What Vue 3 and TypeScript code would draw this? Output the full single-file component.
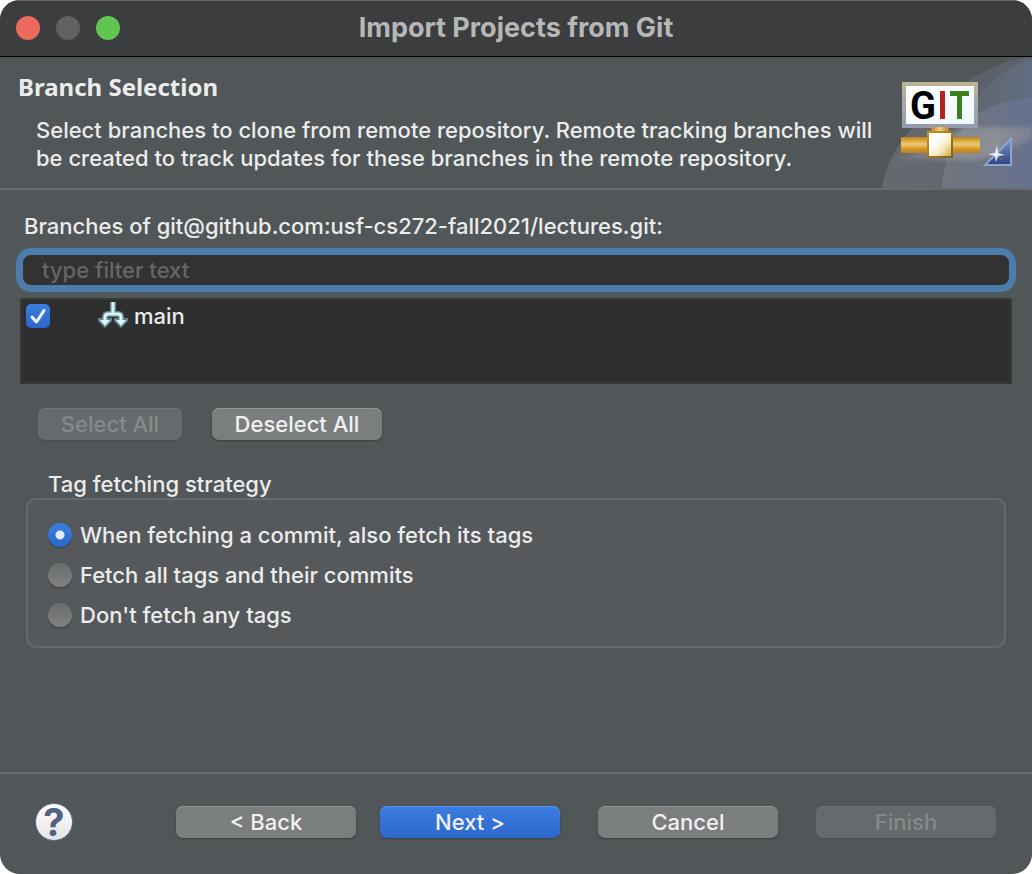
<script setup lang="ts">
import { ref } from 'vue'

interface Strategy {
  id: string
  label: string
}

const strategies: Strategy[] = [
  { id: 'auto', label: 'When fetching a commit, also fetch its tags' },
  { id: 'all', label: 'Fetch all tags and their commits' },
  { id: 'none', label: "Don't fetch any tags" },
]

const filter = ref('')
const mainSelected = ref(true)
const strategy = ref('auto')
</script>

<template>
  <main class="window">
    <header class="titlebar">
      <div class="lights">
        <button class="light close" type="button" aria-label="Close"></button>
        <button class="light minimize" type="button" aria-label="Minimize" disabled></button>
        <button class="light zoom" type="button" aria-label="Zoom"></button>
      </div>
      <h1 class="title">Import Projects from Git</h1>
    </header>

    <section class="banner">
      <div class="intro">
        <h2>Branch Selection</h2>
        <p>
          Select branches to clone from remote repository. Remote tracking branches will be created
          to track updates for these branches in the remote repository.
        </p>
      </div>
      <svg class="art" viewBox="0 0 150 131" width="150" height="131" aria-hidden="true">
        <defs>
          <linearGradient id="back" x1="0" y1="0" x2="1" y2="0">
            <stop offset="0" stop-color="#64686b" />
            <stop offset="0.5" stop-color="#5a6066" />
            <stop offset="1" stop-color="#5b636e" />
          </linearGradient>
          <linearGradient id="middle" x1="0" y1="0" x2="1" y2="0">
            <stop offset="0" stop-color="#65696f" />
            <stop offset="0.6" stop-color="#60676f" />
            <stop offset="1" stop-color="#616c81" />
          </linearGradient>
          <linearGradient id="front" x1="0" y1="0" x2="1" y2="0">
            <stop offset="0" stop-color="#71757e" />
            <stop offset="1" stop-color="#66728e" />
          </linearGradient>
          <linearGradient id="beam" x1="0" y1="0" x2="1" y2="0">
            <stop offset="0" stop-color="#96979b" stop-opacity="0.1" />
            <stop offset="0.35" stop-color="#96979b" stop-opacity="0.6" />
            <stop offset="0.75" stop-color="#96979b" stop-opacity="0.75" />
            <stop offset="1" stop-color="#96979b" stop-opacity="0.4" />
          </linearGradient>
          <linearGradient id="frame" x1="0" y1="0" x2="0" y2="1">
            <stop offset="0" stop-color="#bdb496" />
            <stop offset="1" stop-color="#929bb1" />
          </linearGradient>
          <linearGradient id="panel" x1="0" y1="0" x2="1" y2="1">
            <stop offset="0" stop-color="#ffffff" />
            <stop offset="1" stop-color="#edf8fd" />
          </linearGradient>
          <linearGradient id="pipe" x1="0" y1="0" x2="0" y2="1">
            <stop offset="0" stop-color="#b98525" />
            <stop offset="0.15" stop-color="#d29c32" />
            <stop offset="0.45" stop-color="#efcd71" />
            <stop offset="0.75" stop-color="#d09629" />
            <stop offset="1" stop-color="#bc8120" />
          </linearGradient>
          <linearGradient id="neck" x1="0" y1="0" x2="1" y2="0">
            <stop offset="0" stop-color="#b98228" />
            <stop offset="0.5" stop-color="#f0cf78" />
            <stop offset="1" stop-color="#b98228" />
          </linearGradient>
          <linearGradient id="joint" x1="0" y1="0" x2="1" y2="1">
            <stop offset="0.35" stop-color="#ffffff" />
            <stop offset="0.65" stop-color="#f6e7bb" />
            <stop offset="1" stop-color="#d39c27" />
          </linearGradient>
          <linearGradient id="jointEdge" x1="0" y1="0" x2="1" y2="1">
            <stop offset="0" stop-color="#c9912b" />
            <stop offset="1" stop-color="#7d5f24" />
          </linearGradient>
          <linearGradient id="corner" x1="0" y1="0" x2="0" y2="1">
            <stop offset="0" stop-color="#7c95c2" />
            <stop offset="1" stop-color="#2c4580" />
          </linearGradient>
          <filter id="soft" x="-10%" y="-30%" width="120%" height="160%">
            <feGaussianBlur stdDeviation="2" />
          </filter>
        </defs>
        <path d="M0 131C4 108 14 88 32 70L76 30C96 16 120 5 144 0H150V131Z" fill="url(#back)" />
        <path d="M0 131C4 108 14 88 32 70H84C86 56 92 46 97 39C112 20 130 8 150 2V131Z" fill="url(#middle)" />
        <path d="M60 131C62 96 76 70 97 56C112 47 130 42 150 41V131Z" fill="url(#front)" />
        <path d="M4 102C46 96 66 78 82 70H150V82C124 92 108 103 90 103Z" fill="url(#beam)" filter="url(#soft)" />
        <rect x="20" y="25" width="76" height="46" fill="url(#frame)" />
        <rect x="24" y="29" width="68" height="38" fill="url(#panel)" />
        <text class="mark" y="62" x="28">G</text>
        <rect x="58" y="34" width="5" height="28" fill="#b5211f" />
        <path d="M68 34H87V39H80V62H75V39H68Z" fill="#38811c" />
        <rect x="49" y="70" width="18" height="6" fill="url(#neck)" />
        <rect x="19" y="80" width="79" height="16" fill="url(#pipe)" />
        <rect x="46" y="75" width="24" height="25" fill="url(#joint)" stroke="url(#jointEdge)" stroke-width="2" />
        <path d="M129 82V108H103Z" fill="url(#corner)" stroke="#8ca4d0" stroke-width="2" />
        <path d="M109 92L120 103M120 92L109 103" stroke="#a7b9de" stroke-width="1" opacity="0.3" />
        <path d="M115 88L116 96L123 98L116 99L114 105L113 99L106 97L113 96Z" fill="#e9effa" />
      </svg>
    </section>

    <form class="content" @submit.prevent>
      <label class="caption" for="filter">Branches of git@github.com:usf-cs272-fall2021/lectures.git:</label>
      <input id="filter" v-model="filter" class="filter" type="text" placeholder="type filter text" />

      <div class="branches">
        <label class="branch">
          <span class="check">
            <input v-model="mainSelected" type="checkbox" />
            <svg v-if="mainSelected" viewBox="0 0 24 24" width="24" height="24" aria-hidden="true">
              <path d="M6 13L10.500 18L18 6.500" fill="none" stroke="#f0f5fd" stroke-width="3" stroke-linecap="round" stroke-linejoin="round" />
            </svg>
          </span>
          <svg class="fork" viewBox="0 0 30 28" width="30" height="28" aria-hidden="true">
            <g stroke="#64868c" stroke-width="6" fill="none">
              <path d="M15 0V13M7 19V15Q7 12 10 12H20Q23 12 23 15V19" />
            </g>
            <path d="M0 16H14V19L7 26L0 19ZM16 16H30V19L23 26L16 19Z" fill="#64868c" />
            <path d="M15 0V12M7 20V15Q7 12 10 12H20Q23 12 23 15V20" stroke="#d9f3f3" stroke-width="3" fill="none" />
            <path d="M2 18H12L7 24ZM18 18H28L23 24Z" fill="#d9f8f8" />
          </svg>
          <span>main</span>
        </label>
      </div>

      <div class="bulk">
        <button class="push select" type="button" disabled>Select All</button>
        <button class="push deselect" type="button">Deselect All</button>
      </div>

      <fieldset class="group" aria-labelledby="strategy-title">
        <div id="strategy-title" class="group-title">Tag fetching strategy</div>
        <div class="options">
          <label v-for="item in strategies" :key="item.id" class="option">
            <input v-model="strategy" type="radio" name="strategy" :value="item.id" />
            <span>{{ item.label }}</span>
          </label>
        </div>
      </fieldset>
    </form>

    <footer class="footer">
      <button class="help" type="button" aria-label="Help">?</button>
      <div class="actions">
        <div class="steps">
          <button class="push" type="button">&lt; Back</button>
          <button class="push primary" type="button">Next &gt;</button>
        </div>
        <button class="push" type="button">Cancel</button>
        <button class="push" type="button" disabled>Finish</button>
      </div>
    </footer>
  </main>
</template>

<style>
body {
  margin: 0;
  background: #ffffff;
}
</style>

<style scoped>
* {
  box-sizing: border-box;
}

.window {
  display: flex;
  flex-direction: column;
  min-height: 100vh;
  overflow: hidden;
  border-radius: 20px;
  background: #515658;
  color: #ebecec;
  font: 500 22px/28px Inter, "Liberation Sans", sans-serif;
}

button,
input {
  margin: 0;
  padding: 0;
  border: 0;
  font: inherit;
}

.titlebar {
  display: grid;
  grid-template-columns: 1fr auto 1fr;
  align-items: center;
  height: 57px;
  padding-bottom: 2px;
  border-top: 1px solid #66696a;
  border-bottom: 1px solid #000000;
  background: #3c3d3e;
}

.lights {
  display: flex;
  gap: 16px;
  padding-left: 16px;
}

.light {
  width: 24px;
  height: 24px;
  border-radius: 50%;
}

.close {
  background: #ed6a5e;
}

.minimize {
  background: #606163;
}

.zoom {
  background: #61c554;
}

.title {
  margin: 0;
  color: #b6b7b7;
  font-size: 27px;
  font-weight: 700;
  line-height: 32px;
}

.banner {
  display: flex;
  justify-content: space-between;
  border-bottom: 2px solid #686c6e;
}

.intro {
  flex: 1;
  padding: 14px 0 0 18px;
}

.intro h2 {
  margin: 0;
  font: 700 24px/32px "Noto Sans", sans-serif;
}

.intro p {
  margin: 13px 0 0 18px;
}

.art {
  flex: none;
  display: block;
}

.mark {
  fill: #000000;
  font: 700 38px Roboto, sans-serif;
}

.content {
  flex: 1;
  display: flex;
  flex-direction: column;
  padding: 22px 16px 0;
}

.caption {
  padding: 0 8px;
}

.filter {
  width: 100%;
  height: 44px;
  margin-top: 8px;
  padding: 0 19px;
  border: 7px solid #4b7cab;
  border-radius: 15px;
  outline: 0;
  background: #323232;
  color: #ebecec;
}

.filter::placeholder {
  color: #666666;
  opacity: 1;
}

.branches {
  height: 86px;
  margin: 6px 4px 0;
  padding: 2px 4px;
  border: 2px solid #373838;
  background: #2e2e2e;
}

.branch {
  display: flex;
  align-items: center;
}

.check {
  display: grid;
  width: 24px;
  height: 24px;
  margin-right: 48px;
}

.check > * {
  grid-area: 1 / 1;
}

.check input {
  width: 24px;
  height: 24px;
  border-radius: 5px;
  appearance: none;
  background: #6b6e6f;
}

.check input:checked {
  background: linear-gradient(#3c7fe0, #2a66c6);
}

.check svg {
  pointer-events: none;
}

.fork {
  margin-right: 6px;
}

.bulk {
  display: flex;
  gap: 30px;
  padding: 24px 22px 0;
}

.push {
  width: 180px;
  height: 32px;
  border-radius: 7px;
  background: #7b7e7f;
  box-shadow: inset 0 1px 0 #929596, 0 1px 2px #393d3f;
  color: #f0f0f0;
}

.push:disabled {
  background: #656a6c;
  box-shadow: inset 0 1px 0 #707476, 0 1px 1px #484d4f;
  color: #86898b;
}

.primary {
  background: linear-gradient(#3c7ee0, #2c68cb);
  box-shadow: inset 0 1px 0 #5691e7, 0 1px 2px #393d3f;
}

.select {
  width: 144px;
}

.deselect {
  width: 170px;
}

.group {
  min-width: 0;
  margin: 30px 10px 0;
  padding: 0;
  border: 0;
}

.group-title {
  padding-left: 22px;
}

.options {
  display: flex;
  flex-direction: column;
  gap: 12px;
  height: 150px;
  padding: 21px 20px;
  border: 2px solid #66696b;
  border-radius: 10px;
  background: #56595b;
}

.option {
  display: flex;
  align-items: center;
  gap: 8px;
}

.option input {
  width: 24px;
  height: 24px;
  border-radius: 50%;
  appearance: none;
  background: linear-gradient(#696c6d, #808283);
  box-shadow: 0 1px 2px #3b3e40;
}

.option input:checked {
  background: radial-gradient(circle, #e0ebfb 4px, transparent 5px), linear-gradient(#3c7fe0, #2a66c6);
}

.footer {
  display: flex;
  align-items: center;
  justify-content: space-between;
  height: 102px;
  padding: 0 36px 4px 35px;
  border-top: 2px solid #686c6b;
}

.help {
  width: 38px;
  height: 38px;
  border: 1px solid #5a6f9b;
  border-radius: 50%;
  background: linear-gradient(#ffffff, #e4e4e4);
  color: #526282;
  font-size: 38px;
  font-weight: 700;
  line-height: 36px;
}

.actions {
  display: flex;
  gap: 38px;
}

.steps {
  display: flex;
  gap: 24px;
}
</style>
